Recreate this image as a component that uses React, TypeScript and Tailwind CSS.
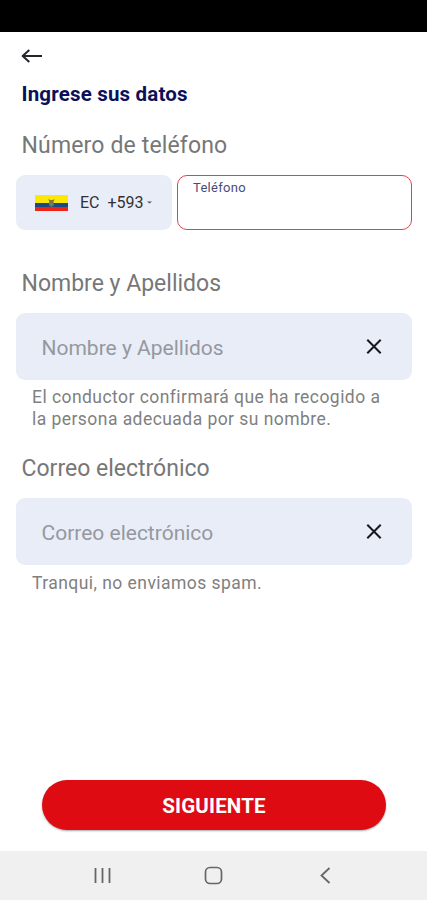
import React from 'react';

function ClearIcon() {
  return (
    <svg width="16" height="16" viewBox="0 0 16 16" fill="none" stroke="#16181d" strokeWidth="2">
      <path d="M1.3 1.8L14.7 15.2M14.7 1.8L1.3 15.2" />
    </svg>
  );
}

function EcuadorFlag() {
  return (
    <svg width="33" height="16" viewBox="0 0 33 16">
      <rect width="33" height="8" fill="#fbe808" />
      <rect y="8" width="33" height="4" fill="#174a86" />
      <rect y="12" width="33" height="4" fill="#ee2418" />
      <path d="M13 4.3L16.3 5.2L19.8 4.3L18 7H15Z" fill="#80702e" />
      <ellipse cx="16.4" cy="8.6" rx="2.5" ry="3.2" fill="#85713a" />
      <ellipse cx="16.4" cy="8.8" rx="1.2" ry="1.8" fill="#5d8291" />
    </svg>
  );
}

function Label({ children, className }: { children: React.ReactNode; className: string }) {
  return <h2 className={`ml-[21.5px] h-7 whitespace-nowrap text-[23px] leading-7 text-[#777777] ${className}`}>{children}</h2>;
}

function Field({ text }: { text: string }) {
  return (
    <div className="ml-4 mr-[15px] flex h-[67px] items-center justify-between rounded-[9px] bg-[#e9edf7] pl-[25.5px] pr-[30px]">
      <span className="whitespace-nowrap pt-[2px] text-[21px] leading-7 text-[#9598a0]">{text}</span>
      <button aria-label="Borrar" className="pb-px"><ClearIcon /></button>
    </div>
  );
}

export default function App() {
  return (
    <div className="flex h-[900px] w-[427px] flex-col overflow-hidden bg-white font-['Roboto',sans-serif]">
      {/* STATUS BAR */}
      <div className="h-8 shrink-0 bg-black"></div>

      <main className="flex-1">
        <header className="flex h-[50px] items-center pb-[2px] pl-[21px]">
          <svg width="22" height="16" viewBox="0 0 22 16" fill="none" stroke="#24262b" strokeWidth="2" strokeLinejoin="round">
            <path d="M21 8H1.5M8.3 2L1.7 8L8.3 14" />
          </svg>
        </header>
        <h1 className="ml-[21.5px] h-6 whitespace-nowrap text-[20.5px] font-bold leading-6 tracking-[0.18px] text-[#0b1159]">Ingrese sus datos</h1>

        {/* PHONE */}
        <Label className="mt-[26px] tracking-[0.15px]">Número de teléfono</Label>
        <div className="ml-4 mr-[15px] mt-[15px] flex h-[55px] gap-[5px]">
          <div className="flex w-[156px] items-center rounded-[9px] bg-[#e9edf7] pl-[19px] text-[16px] text-[#303238]">
            <EcuadorFlag />
            <span className="ml-3">EC</span>
            <span className="ml-2">+593</span>
            <svg className="ml-[3px]" width="5" height="3" viewBox="0 0 5 3"><path d="M0 0.5H5L2.5 2.5Z" fill="#555" /></svg>
          </div>
          <div className="flex-1 rounded-[10px] border-[1.5px] border-[#cf4a50] pl-[15px] pt-[4px] text-[13px] leading-4 tracking-[0.3px] text-[#484c7c]">Teléfono</div>
        </div>

        {/* NAME */}
        <Label className="mt-10">Nombre y Apellidos</Label>
        <div className="h-[15px]"></div>
        <Field text="Nombre y Apellidos" />
        <p className="ml-8 mt-[6px] text-[17.5px] leading-[22px] tracking-[0.45px] text-[#808080]">
          <span className="block whitespace-nowrap">El conductor confirmará que ha recogido a</span>
          <span className="block whitespace-nowrap">la persona adecuada por su nombre.</span>
        </p>

        {/* EMAIL */}
        <Label className="mt-[25px]">Correo electrónico</Label>
        <div className="h-[15px]"></div>
        <Field text="Correo electrónico" />
        <p className="ml-8 mt-[7px] whitespace-nowrap text-[17.5px] leading-[22px] tracking-[0.45px] text-[#808080]">Tranqui, no enviamos spam.</p>
      </main>

      <button className="mb-[21px] ml-[42px] h-[50px] w-[344px] shrink-0 rounded-full bg-[#df0b12] pt-[2px] text-[20.5px] font-bold tracking-[0.15px] text-white shadow-[0_1px_2px_rgba(0,0,0,0.35)]">SIGUIENTE</button>

      {/* ANDROID NAV */}
      <nav className="flex h-[49px] shrink-0 items-center bg-[#f0f0f0] pl-[94px]">
        <svg width="17" height="17" viewBox="0 0 17 17" stroke="#666" strokeWidth="1.8"><path d="M1.5 1V16M8.5 1V16M15.5 1V16" /></svg>
        <svg className="ml-[93px]" width="19" height="19" viewBox="0 0 19 19" fill="none" stroke="#666" strokeWidth="1.7"><rect x="1.5" y="1.5" width="16" height="16" rx="4.5" /></svg>
        <svg className="ml-[97px]" width="11" height="17" viewBox="0 0 11 17" fill="none" stroke="#666" strokeWidth="1.8"><path d="M9.5 1L1.5 8.5L9.5 16" /></svg>
      </nav>
    </div>
  );
}
